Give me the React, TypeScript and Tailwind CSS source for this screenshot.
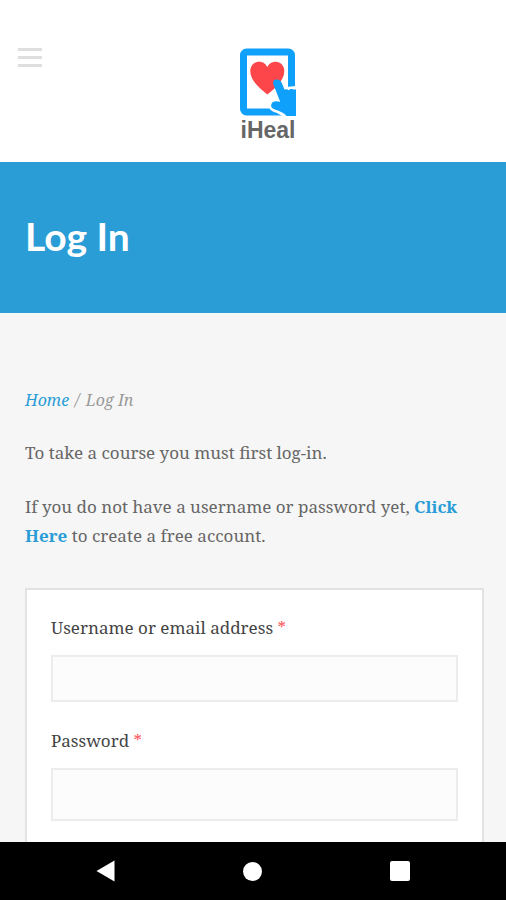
import { useState } from 'react';

const fields = [
	{ id: "username", label: "Username or email address", type: "text", height: "h-[47px]" },
	{ id: "password", label: "Password", type: "password", height: "h-[53px]" },
];

const Logo = () => (
	<a href="#home" aria-label="iHeal" className="flex flex-col items-center">
		<svg width="56" height="68" viewBox="0 0 56 68" fill="none" aria-hidden="true">
			<rect x="3.5" y="4" width="48" height="60" rx="3" fill="#fff" stroke="#0fa0fb" strokeWidth="7" />
			<path
				d="M27.3 46.5C22 42 10.3 33.5 10.3 23.2C10.3 17.5 14.3 13.8 19 13.8C23 13.8 26 16 27.3 19.2C28.6 16 31.8 13.8 35.7 13.8C40.4 13.8 44.3 17.5 44.3 23.2C44.3 33.5 32.6 42 27.3 46.5Z"
				fill="#fd464a"
			/>
			{/* pointing hand, with a white edge that cuts into the tablet */}
			<path d="M46 39L57 38V69H44L36 64.5C31 63.5 28 60 29 55.5L33 52H40Z" fill="#fff" />
			<path
				d="M33.6 37C32.4 34 33.6 32 36 31.6C38.6 31.2 40.6 32.4 41.6 34.6L44.6 41.8C46.2 41 47.6 41.2 48.6 42.2C50 40.8 52 40.8 53.4 41.4H56V68H46.5C44 64.6 40 63 34.8 61.4C31.6 60.4 30.6 58.2 31.3 56.2C32.2 53.8 34.8 53.2 37.4 53.4L40.2 53.8Z"
				fill="#0fa0fb"
			/>
		</svg>
		<span className="font-['Liberation_Sans',sans-serif] text-[23px] leading-[28px] font-bold text-[#666]">iHeal</span>
	</a>
);

const App = () => {
	const [values, setValues] = useState<Record<string, string>>({});

	return (
		<div className="flex h-screen flex-col overflow-hidden bg-[#f6f6f6] font-['Noto_Serif','Droid_Serif','DejaVu_Serif',serif] text-[17px] leading-[29px] text-[#666]">
			<header className="flex h-[162px] shrink-0 items-start bg-white pt-12 pr-3 pl-[18px]">
				<button type="button" aria-label="Menu" className="flex w-6 flex-col gap-[5px]">
					<span className="h-[3px] bg-[#dedede]" />
					<span className="h-[3px] bg-[#dedede]" />
					<span className="h-[3px] bg-[#dedede]" />
				</button>
				<div className="flex flex-1 justify-center">
					<Logo />
				</div>
			</header>

			<div className="flex h-[151px] shrink-0 items-center bg-[#2a9dd7] px-[25px] pb-1">
				<h1 className="font-['Lato',sans-serif] text-[39px] leading-[48px] font-bold text-white">Log In</h1>
			</div>

			<main className="flex min-h-0 flex-1 flex-col overflow-hidden pt-[73px] pr-[22px] pl-[25px]">
				<nav aria-label="Breadcrumb" className="flex gap-1.5 text-[16px] text-[#999] italic">
					<a href="#home" className="text-[#2a9dd7]">Home</a>
					<span>/</span>
					<span>Log In</span>
				</nav>
				<p className="mt-[23px]">To take a course you must first log-in.</p>
				<p className="mt-[25px]">
					If you do not have a username or password yet, <a href="#register" className="font-bold text-[#2a9dd7]">Click Here</a> to create a free account.
				</p>

				<form className="mt-[38px] flex flex-1 flex-col gap-6 border-2 border-b-0 border-[#e2e2e2] bg-white p-6 pt-[23px]">
					{fields.map((field) => (
						<div key={field.id} className="flex flex-col gap-[13px]">
							<label htmlFor={field.id} className="text-[#444]">
								{field.label} <span className="text-[#fb5a5e]">*</span>
							</label>
							<input
								id={field.id}
								type={field.type}
								value={values[field.id] ?? ""}
								onChange={(e) => setValues({ ...values, [field.id]: e.target.value })}
								className={`${field.height} w-full shrink-0 border-2 border-[#ececec] bg-[#fcfcfc] px-3 outline-none`}
							/>
						</div>
					))}
				</form>
			</main>

			<footer className="flex h-[58px] shrink-0 items-center justify-around bg-black px-8">
				<button type="button" aria-label="Back">
					<svg width="20" height="22" viewBox="0 0 20 22" fill="#fff"><path d="M0.5 11L18.5 0.5V21.5Z" /></svg>
				</button>
				<button type="button" aria-label="Home" className="size-[19px] rounded-full bg-white" />
				<button type="button" aria-label="Recent apps" className="size-5 rounded-xs bg-white" />
			</footer>
		</div>
	);
};

export default App;
